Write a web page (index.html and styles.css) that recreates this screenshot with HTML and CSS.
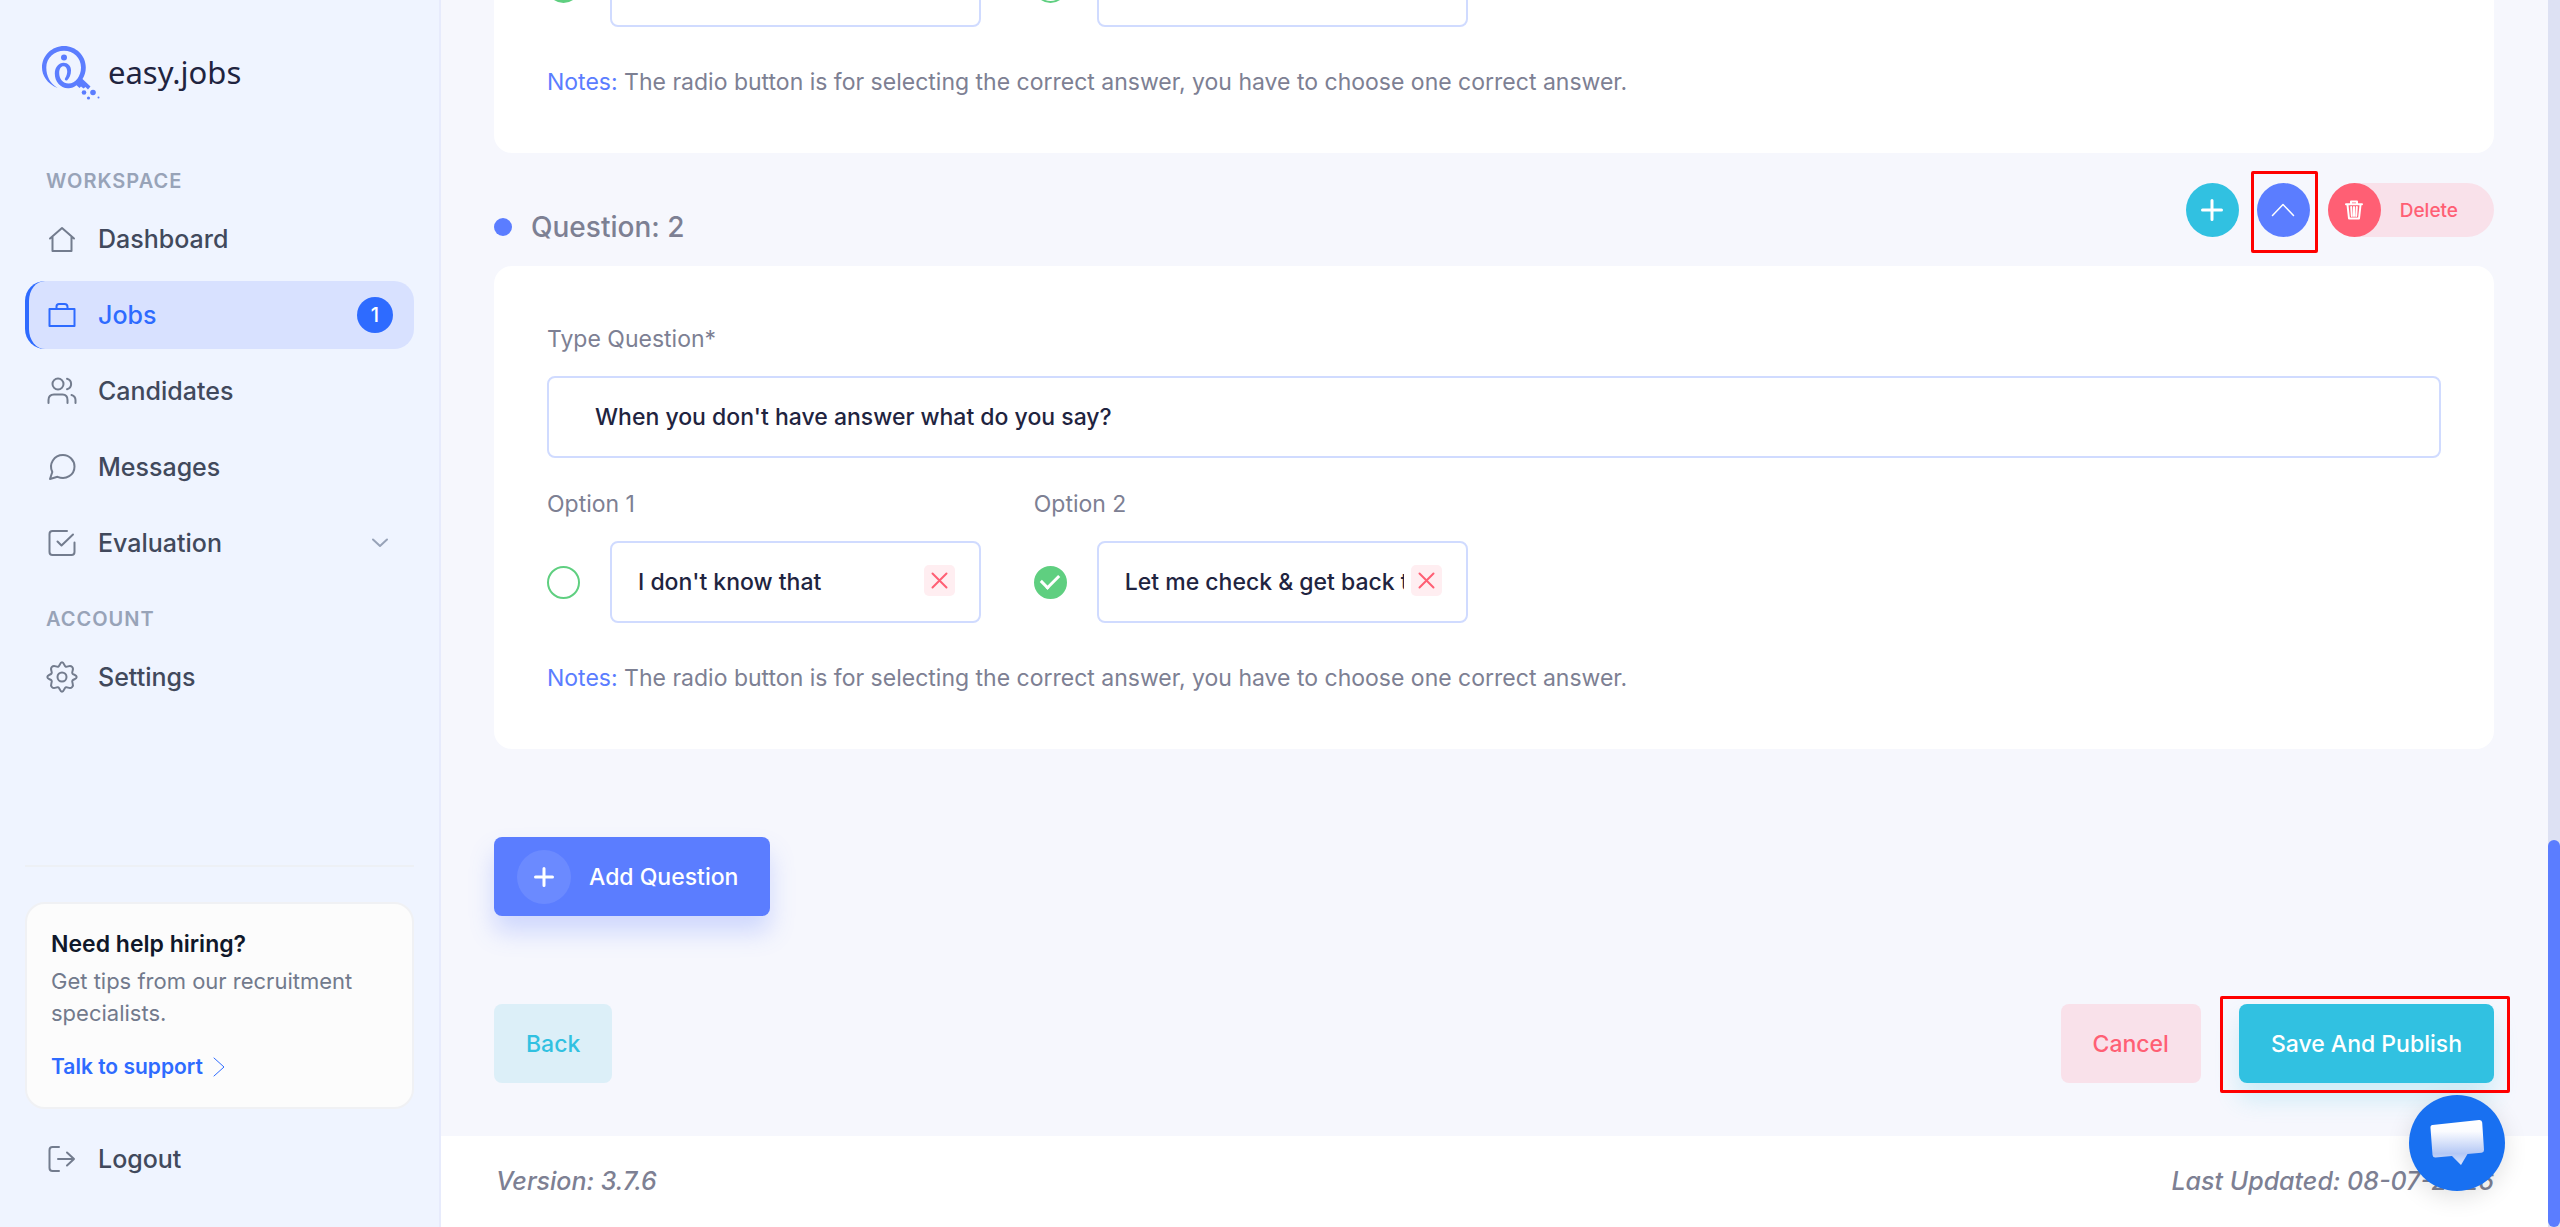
FILE: index.html
```html
<!DOCTYPE html>
<html lang="en">
<head>
    <meta charset="UTF-8">
    <meta name="viewport" content="width=device-width, initial-scale=1.0">
    <title>easy.jobs</title>
    <link rel="stylesheet" href="styles.css">
</head>
<body>
    <aside class="sidebar">
        <a class="logo" href="#">
            <svg width="60" height="56" viewBox="0 0 60 56" fill="none">
                <path d="M15.500 42C5 37.500 0 29.500 0 21.500C0 9.500 10 0 22 0S43.800 9.500 43.800 21.500C43.800 26 42.500 30 40.500 33L48.500 40.500L46 43.500L43.500 41L41.500 42.500L39 40.500L37.500 42L34.500 39.300C32 41.500 29 42.500 26 42.300C18 42 12.800 35.500 12.800 27.500C12.800 21 17 16.800 21.500 16.800C26 16.800 29 20 29 24.500C29 29 27.500 32 25 34.500C23 35 22.300 33.500 23.200 32C24.800 29.500 25.300 27 25.200 25C25 22 23.500 20.300 21.500 20.300C19 20.300 17.200 23 17.200 27C17.200 33 21 37.500 26.500 37.500C33.500 37.500 39 30 39 21.500C39 12 31.500 4.800 22 4.800S4.300 12 4.300 21.500C4.300 30.500 8 37 15.500 42Z" fill="#5b7dff"/>
                <circle cx="22" cy="11.500" r="3" fill="#5b7dff"/>
                <circle cx="42" cy="46.500" r="2.300" fill="#5b7dff"/>
                <circle cx="51" cy="46.500" r="2.800" fill="#5b7dff"/>
                <circle cx="46.500" cy="52" r="1.600" fill="#5b7dff"/>
                <circle cx="56.500" cy="51.500" r="1" fill="#5b7dff"/>
            </svg>
            <span class="logo-text">easy.jobs</span>
        </a>

        <nav class="menu">
            <h2 class="menu-title">WORKSPACE</h2>
            <a class="menu-item" href="#">
                <svg class="icon" viewBox="0 0 32 32"><path d="M4 15.500L16 5L28 15.500M6.500 14V28H25.500V14"/></svg>
                Dashboard
            </a>
            <a class="menu-item active" href="#">
                <svg class="icon" viewBox="0 0 32 32"><path d="M3.500 10H28.500V27H3.500ZM10.500 10V7.500Q10.500 5 13 5H18.500Q21.500 5 21.500 8V10"/></svg>
                Jobs
                <span class="count">1</span>
            </a>
            <a class="menu-item" href="#">
                <svg class="icon" viewBox="0 0 32 32"><circle cx="12" cy="9" r="5.500"/><path d="M2.500 28V25Q2.500 19.500 8 19.500H16.500Q21.500 19.500 21.500 25V28M21 3.700C26.500 5.200 26.500 12.800 21 14.300M25.500 20Q29.500 21.200 29.500 25V28"/></svg>
                Candidates
            </a>
            <a class="menu-item" href="#">
                <svg class="icon" viewBox="0 0 32 32"><path d="M4 28L6.300 21C2.500 13 8 4 17 4C23.500 4 28.500 9.500 28.500 15.500C28.500 24 20 29.500 11.500 25.800Z"/></svg>
                Messages
            </a>
            <a class="menu-item" href="#">
                <svg class="icon" viewBox="0 0 32 32"><path d="M21 4H6.500Q3.500 4 3.500 7V25Q3.500 28 6.500 28H25.500Q28.500 28 28.500 25V15.500M11.500 14.500L15.500 18.500L27 7.500"/></svg>
                Evaluation
                <svg class="chevron" viewBox="0 0 16 10"><path d="M1 1.500L8 8L15 1.500"/></svg>
            </a>
            <h2 class="menu-title account">ACCOUNT</h2>
            <a class="menu-item" href="#">
                <svg class="icon" viewBox="0 0 32 32"><path d="M16 1.300C18.200 1.300 18 4.600 19.600 5.600C21.400 6.700 23.600 3.400 26.100 5.900C28.600 8.400 25.300 10.600 26.400 12.400C27.400 14 30.700 13.800 30.700 16S27.400 18 26.400 19.600C25.300 21.400 28.600 23.600 26.100 26.100C23.600 28.600 21.400 25.300 19.600 26.400C18 27.400 18.200 30.700 16 30.700S14 27.400 12.400 26.400C10.600 25.300 8.400 28.600 5.900 26.100C3.400 23.600 6.700 21.400 5.600 19.600C4.600 18 1.300 18.200 1.300 16S4.600 14 5.600 12.400C6.700 10.600 3.400 8.400 5.900 5.900C8.400 3.400 10.600 6.700 12.400 5.600C14 4.600 13.800 1.300 16 1.300Z"/><circle cx="16" cy="16" r="4.500"/></svg>
                Settings
            </a>
        </nav>

        <div class="sidebar-bottom">
            <div class="help">
                <h3 class="help-title">Need help hiring?</h3>
                <p class="help-text">Get tips from our recruitment specialists.</p>
                <a class="help-link" href="#">Talk to support
                    <svg width="12" height="20" viewBox="0 0 12 20"><path d="M1 1L11 10L1 19"/></svg>
                </a>
            </div>
            <a class="menu-item" href="#">
                <svg class="icon" viewBox="0 0 32 32"><path d="M13 4H6.500Q3.500 4 3.500 7V25Q3.500 28 6.500 28H13M12 16H28M21 9.500L28 16L21 22.500"/></svg>
                Logout
            </a>
        </div>
    </aside>

    <main class="main">
        <form class="content">
            <section class="card">
                <div class="options">
                    <div class="option">
                        <label class="label" for="q1-option1">Option 1</label>
                        <div class="option-row">
                            <input class="radio" type="radio" name="q1" aria-label="Option 1 is correct" checked>
                            <input class="field" type="text" id="q1-option1" value="Eager">
                        </div>
                    </div>
                    <div class="option">
                        <label class="label" for="q1-option2">Option 2</label>
                        <div class="option-row">
                            <input class="radio" type="radio" name="q1" aria-label="Option 2 is correct">
                            <input class="field" type="text" id="q1-option2" value="Annoyed">
                        </div>
                    </div>
                </div>
                <p class="notes"><span class="notes-label">Notes:</span> The radio button is for selecting the correct answer, you have to choose one correct answer.</p>
            </section>

            <div class="question-head">
                <h2 class="question-title">Question: 2</h2>
                <div class="tools">
                    <button class="tool add" type="button" aria-label="Add">
                        <svg width="22" height="22" viewBox="0 0 22 22"><path d="M11 1.500V20.500M1.500 11H20.500" stroke-width="3"/></svg>
                    </button>
                    <div class="highlight highlight-tool">
                        <button class="tool collapse" type="button" aria-label="Collapse">
                            <svg width="24" height="14" viewBox="0 0 24 14"><path d="M1.500 12.500L12 1.500L22.500 12.500" stroke-width="1.500"/></svg>
                        </button>
                    </div>
                    <button class="delete" type="button">
                        <span class="tool trash">
                            <svg width="18" height="20" viewBox="0 0 18 20"><path d="M1 4.300H17M6 4V1.500H12V4M2.500 5L4 18.500H14L15.500 5M6.200 7L6.800 16M9 7V16M11.800 7L11.200 16" stroke-width="2"/></svg>
                        </span>
                        <span class="delete-text">Delete</span>
                    </button>
                </div>
            </div>

            <section class="card">
                <label class="label" for="question">Type Question*</label>
                <input class="field question-field" type="text" id="question" value="When you don't have answer what do you say?">
                <div class="options">
                    <div class="option">
                        <label class="label" for="q2-option1">Option 1</label>
                        <div class="option-row">
                            <input class="radio" type="radio" name="q2" aria-label="Option 1 is correct">
                            <div class="field-box">
                                <input class="field" type="text" id="q2-option1" value="I don't know that">
                                <button class="remove" type="button" aria-label="Remove option 1"><svg width="17" height="17" viewBox="0 0 17 17"><path d="M1.500 1.500L15.500 15.500M15.500 1.500L1.500 15.500"/></svg></button>
                            </div>
                        </div>
                    </div>
                    <div class="option">
                        <label class="label" for="q2-option2">Option 2</label>
                        <div class="option-row">
                            <input class="radio" type="radio" name="q2" aria-label="Option 2 is correct" checked>
                            <div class="field-box">
                                <input class="field" type="text" id="q2-option2" value="Let me check &amp; get back to you">
                                <button class="remove" type="button" aria-label="Remove option 2"><svg width="17" height="17" viewBox="0 0 17 17"><path d="M1.500 1.500L15.500 15.500M15.500 1.500L1.500 15.500"/></svg></button>
                            </div>
                        </div>
                    </div>
                </div>
                <p class="notes"><span class="notes-label">Notes:</span> The radio button is for selecting the correct answer, you have to choose one correct answer.</p>
            </section>

            <button class="btn btn-add" type="button">
                <span class="btn-icon"><svg width="20" height="20" viewBox="0 0 20 20"><path d="M10 1.500V18.500M1.500 10H18.500"/></svg></span>
                Add Question
            </button>

            <div class="actions">
                <button class="btn btn-back" type="button">Back</button>
                <button class="btn btn-cancel" type="button">Cancel</button>
                <div class="highlight highlight-save">
                    <button class="btn btn-save" type="submit">Save And Publish</button>
                </div>
            </div>
        </form>

        <footer class="footer">
            <span>Version: 3.7.6</span>
            <span>Last Updated: 08-07-2026</span>
        </footer>
    </main>

    <div class="scrollbar"><div class="scrollbar-thumb"></div></div>

    <button class="chat" type="button" aria-label="Open chat">
        <svg width="56" height="50" viewBox="0 0 56 50">
            <defs>
                <linearGradient id="bubble" x1="0" y1="0" x2="0" y2="1">
                    <stop offset="0" stop-color="#fff"/>
                    <stop offset="0.250" stop-color="#fbfcff"/>
                    <stop offset="0.750" stop-color="#b4c8f5"/>
                    <stop offset="1" stop-color="#dbe6fd"/>
                </linearGradient>
            </defs>
            <path d="M3.500 7L50 2Q53 1.700 53.200 4.500L55 32Q55 34.500 52.500 34.800L38.500 36L32 47L23 38L6.500 39.500Q4 39.700 3.500 37L1.500 10Q1.200 7.300 3.500 7Z" fill="url(#bubble)"/>
        </svg>
    </button>
</body>
</html>
```
FILE: styles.css
```css
* {
    box-sizing: border-box;
}
body {
    display: flex;
    height: 100vh;
    margin: 0;
    overflow: hidden;
    background: #f6f7fd;
    color: #7d8093;
    font-family: Inter, sans-serif;
    font-size: 23px;
    font-weight: 500;
}
h2,
h3,
p {
    margin: 0;
}
a {
    text-decoration: none;
}
button,
input {
    margin: 0;
    font: inherit;
}
button {
    padding: 0;
    border: 0;
    cursor: pointer;
}
svg {
    flex: none;
    fill: none;
    stroke-linecap: round;
    stroke-linejoin: round;
}

/* Sidebar */
.sidebar {
    display: flex;
    flex-direction: column;
    flex: none;
    width: 441px;
    padding: 46px 25px 34px;
    background: #eff4ff;
    border-right: 2px solid #e7ebfc;
}
.logo {
    display: flex;
    align-items: flex-start;
    gap: 6px;
    margin-bottom: 63px;
    padding-left: 17px;
}
.logo-text {
    color: #1f2440;
    font-family: "Noto Sans", sans-serif;
    font-size: 31px;
    font-weight: 400;
    line-height: 52px;
}
.menu {
    display: flex;
    flex-direction: column;
    gap: 8px;
}
.menu-title {
    padding-left: 21px;
    color: #98a3b8;
    font-size: 20px;
    font-weight: 600;
    letter-spacing: 1px;
    line-height: 32px;
}
.menu-title.account {
    margin-top: 18px;
}
.menu-item {
    display: flex;
    align-items: center;
    height: 68px;
    padding: 0 21px 0 17px;
    border-left: 4px solid transparent;
    border-radius: 20px;
    color: #41495c;
    font-size: 25px;
    line-height: 36px;
}
.menu-item.active {
    background: #d8e1ff;
    border-left-color: #2e6bff;
    color: #2e6bff;
}
.icon {
    width: 32px;
    height: 32px;
    margin-right: 20px;
    stroke: #737c8e;
    stroke-width: 2;
}
.active .icon {
    stroke: #2e6bff;
}
.chevron {
    width: 16px;
    height: 10px;
    margin: 0 5px 0 auto;
    stroke: #98a3b8;
    stroke-width: 2;
}
.count {
    width: 36px;
    height: 36px;
    margin-left: auto;
    border-radius: 50%;
    background: #2e6bff;
    color: #fff;
    font-size: 20px;
    line-height: 36px;
    text-align: center;
}
.sidebar-bottom {
    display: flex;
    flex-direction: column;
    gap: 16px;
    margin-top: auto;
    padding-top: 35px;
    border-top: 2px solid #edf0f5;
}
.help {
    padding: 22px 24px;
    border: 2px solid #f0f1f4;
    border-radius: 20px;
    background: #fcfcfc;
}
.help-title {
    margin-bottom: 3px;
    color: #10182a;
    font-size: 23px;
    font-weight: 600;
    line-height: 36px;
}
.help-text {
    color: #727a8c;
    font-size: 22px;
    font-weight: 400;
    line-height: 32px;
}
.help-link {
    display: flex;
    align-items: center;
    gap: 10px;
    margin-top: 20px;
    color: #2e6bff;
    font-size: 21px;
    font-weight: 600;
    line-height: 36px;
}
.help-link svg {
    stroke: #2e6bff;
}

/* Questions, anchored to the end of the scroll area */
.main {
    display: flex;
    flex: 1;
    flex-direction: column;
    justify-content: flex-end;
    min-width: 0;
    overflow: hidden;
}
.content {
    padding: 0 66px 53px 53px;
}
.card {
    padding: 56px 53px 54px;
    border-radius: 18px;
    background: #fff;
}
.label {
    display: block;
    margin-bottom: 20px;
    font-weight: 400;
    line-height: 34px;
}
.field {
    display: block;
    flex: 1;
    width: 100%;
    min-width: 0;
    height: 82px;
    padding: 0 62px 0 26px;
    border: 2px solid #d0dbff;
    border-radius: 8px;
    background: #fff;
    color: #1f2440;
}
.question-field {
    margin-bottom: 29px;
    padding-left: 46px;
}
.options {
    display: grid;
    grid-template-columns: repeat(4, 1fr);
    gap: 53px;
}
.option-row {
    display: flex;
    align-items: center;
    gap: 30px;
}
.radio {
    flex: none;
    width: 33px;
    height: 33px;
    appearance: none;
    border: 2px solid #5fcf80;
    border-radius: 50%;
}
.radio:checked {
    display: flex;
    align-items: center;
    justify-content: center;
    background: #5fcf80;
}
.radio:checked::before {
    content: "";
    width: 15px;
    height: 8px;
    margin-bottom: 5px;
    border-bottom: 3px solid #fff;
    border-left: 3px solid #fff;
    transform: rotate(-45deg);
}
.field-box {
    position: relative;
    flex: 1;
}
.remove {
    position: absolute;
    top: 24px;
    right: 26px;
    display: flex;
    align-items: center;
    justify-content: center;
    width: 31px;
    height: 31px;
    border-radius: 5px;
    background: #ffeef1;
}
.remove svg {
    stroke: #ff5f74;
    stroke-width: 2;
}
.notes {
    margin-top: 38px;
    font-weight: 400;
    line-height: 34px;
}
.notes-label {
    color: #5b7dff;
}
.question-head {
    display: flex;
    align-items: flex-start;
    justify-content: space-between;
    padding: 30px 0 21px;
}
.question-title {
    display: flex;
    align-items: center;
    gap: 19px;
    padding-top: 26px;
    font-size: 28px;
    font-weight: 500;
    line-height: 36px;
}
.question-title::before {
    content: "";
    width: 18px;
    height: 18px;
    border-radius: 50%;
    background: #5b7dff;
}
.tools {
    display: flex;
    gap: 18px;
}
.tool {
    display: flex;
    align-items: center;
    justify-content: center;
    width: 53px;
    height: 54px;
    border-radius: 50%;
    stroke: #fff;
}
.add {
    background: #31c1e1;
}
.collapse {
    background: #5b7dff;
}
.trash {
    background: #ff5f74;
}
.delete {
    display: flex;
    align-items: center;
    border-radius: 27px;
    background: #f9e1ea;
    color: #ff5f74;
    font-size: 19px;
}
.delete-text {
    padding: 0 36px 0 19px;
}

/* Red marker frames */
.highlight {
    position: relative;
}
.highlight::after {
    content: "";
    position: absolute;
    border: 3px solid #f00;
    border-radius: 2px;
    pointer-events: none;
}
.highlight-tool::after {
    inset: -12px -8px -16px -6px;
}
.highlight-save::after {
    inset: -8px -16px -10px -19px;
}

.btn {
    display: flex;
    align-items: center;
    height: 79px;
    padding: 0 32px;
    border-radius: 8px;
    color: #fff;
}
.btn-add {
    gap: 18px;
    margin-top: 88px;
    padding-left: 23px;
    background: #5b7dff;
    box-shadow: 0 16px 24px rgba(91, 125, 255, 0.25);
}
.btn-icon {
    display: flex;
    align-items: center;
    justify-content: center;
    width: 54px;
    height: 54px;
    border-radius: 50%;
    background: rgba(255, 255, 255, 0.1);
    stroke: #fff;
    stroke-width: 3;
}
.actions {
    display: flex;
    align-items: center;
    margin-top: 88px;
}
.btn-back {
    margin-right: auto;
    background: #dceff8;
    color: #31c1e1;
}
.btn-cancel {
    margin-right: 38px;
    background: #f9e1ea;
    color: #ff5f74;
}
.btn-save {
    background: #31c1e1;
    box-shadow: 0 16px 24px rgba(49, 193, 225, 0.2);
}
.footer {
    display: flex;
    flex: none;
    justify-content: space-between;
    height: 91px;
    padding: 0 66px 0 55px;
    background: #fff;
    font-size: 25px;
    font-style: italic;
    line-height: 91px;
}

/* Overlays */
.scrollbar {
    position: fixed;
    top: 0;
    right: 0;
    bottom: 0;
    display: flex;
    align-items: flex-end;
    width: 12px;
    background: #dde1f3;
}
.scrollbar-thumb {
    width: 12px;
    height: 387px;
    border-radius: 6px;
    background: #5b7dff;
}
.chat {
    position: fixed;
    right: 55px;
    bottom: 36px;
    display: flex;
    align-items: center;
    justify-content: center;
    width: 96px;
    height: 96px;
    border-radius: 50%;
    background: #1870f1;
    box-shadow: 0 6px 24px rgba(0, 0, 0, 0.12);
}
```
